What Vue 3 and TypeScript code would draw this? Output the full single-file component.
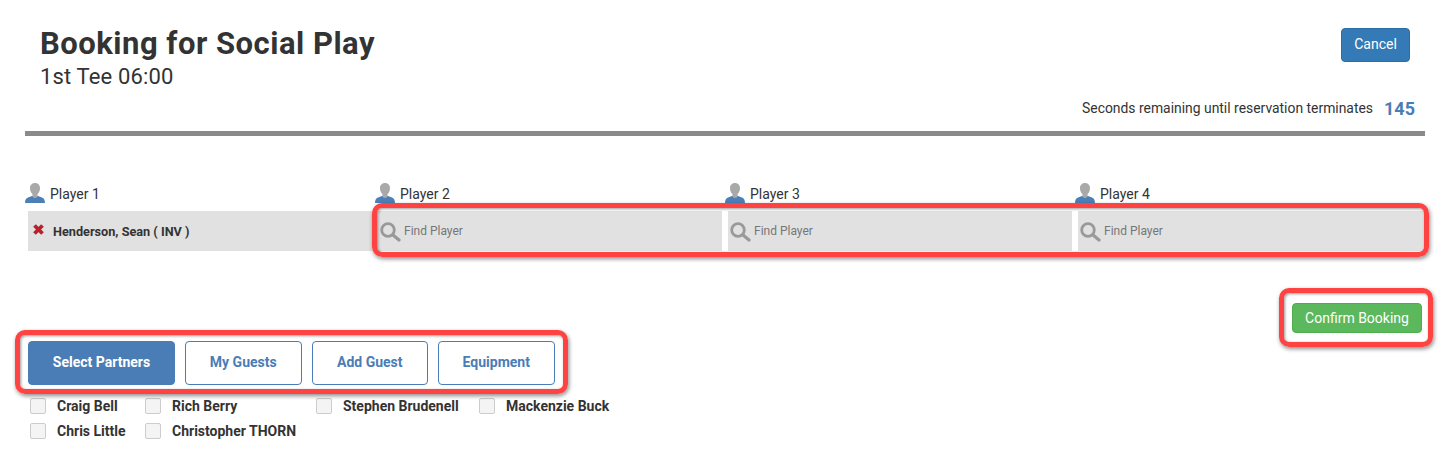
<template>
  <div class="page">
    <header class="head">
      <div class="titles">
        <h1>Booking for Social Play</h1>
        <div class="sub">1st Tee 06:00</div>
      </div>
      <button class="cancel">Cancel</button>
    </header>
    <div class="timer">
      <span>Seconds remaining until reservation terminates</span>
      <strong>145</strong>
    </div>
    <div class="rule"></div>

    <div class="players">
      <div v-for="(p, i) in players" :key="p" class="player">
        <div class="plabel">
          <svg class="person" width="20" height="20" viewBox="0 0 20 20">
            <path d="M0 20c.2-3.200 1-4.900 3-5.500l4-1.500h6l4 1.500c2 .6 2.800 2.300 3 5.500z" fill="#4a7fb8" />
            <path d="M10 0c3 0 5 2.200 5 5.200 0 2.600-1 4.500-2.400 5.700v1.900c0 1.400-1.200 2.200-2.600 2.200s-2.600-.8-2.600-2.200v-1.900C6 9.700 5 7.800 5 5.200 5 2.200 7 0 10 0z" fill="#a9a9a9" />
          </svg>
          <span>{{ p }}</span>
        </div>
        <div v-if="i === 0" class="cell first">
          <svg class="remove" width="13" height="13" viewBox="0 0 13 13">
            <path d="M2.500 2.500l8 8M10.500 2.500l-8 8" stroke="#b8202c" stroke-width="3.800" />
          </svg>
          <b>Henderson, Sean ( INV )</b>
        </div>
        <div v-else class="cell">
          <svg class="search" width="22" height="22" viewBox="0 0 22 22" fill="none" stroke="#999" stroke-linecap="round">
            <circle cx="8" cy="10" r="6.300" stroke-width="2.800" />
            <path d="M13 15l6 5" stroke-width="3.200" />
          </svg>
          <span>Find Player</span>
        </div>
      </div>
      <div class="mark mark-find"></div>
    </div>

    <div class="confirm-row">
      <button class="confirm">Confirm Booking</button>
      <div class="mark mark-confirm"></div>
    </div>

    <div class="tabs">
      <button v-for="(t, i) in tabs" :key="t" class="tab" :class="{ active: i === 0 }">{{ t }}</button>
      <div class="mark mark-tabs"></div>
    </div>

    <div class="partners">
      <label v-for="n in partners" :key="n" class="partner">
        <i class="box"></i>
        <span>{{ n }}</span>
      </label>
    </div>
  </div>
</template>

<script setup lang="ts">
const players = ['Player 1', 'Player 2', 'Player 3', 'Player 4']
const tabs = ['Select Partners', 'My Guests', 'Add Guest', 'Equipment']
const partners = [
  'Craig Bell',
  'Rich Berry',
  'Stephen Brudenell',
  'Mackenzie Buck',
  'Chris Little',
  'Christopher THORN'
]
</script>

<style>
html,
body {
  margin: 0;
  background: #fff;
}
</style>

<style scoped>
* {
  box-sizing: border-box;
}

.page {
  width: 1453px;
  height: 450px;
  overflow: hidden;
  padding: 0 28px 0 25px;
  font-family: Roboto, Arial, sans-serif;
  color: #333;
}

.head {
  display: flex;
  justify-content: space-between;
  align-items: flex-start;
  padding: 26px 15px 0;
  height: 94px;
}

h1 {
  margin: 0;
  font-size: 31px;
  line-height: 36px;
  font-weight: 700;
  letter-spacing: 0.5px;
}

.sub {
  font-size: 22px;
  line-height: 30px;
  letter-spacing: 0.15px;
}

.cancel {
  width: 69px;
  height: 34px;
  margin: 2px 0 0;
  padding: 0 0 2px;
  background: #337ab7;
  border: 1px solid #2e6da4;
  border-radius: 4px;
  color: #fff;
  font: 14px Roboto, Arial, sans-serif;
}

.timer {
  display: flex;
  justify-content: flex-end;
  align-items: center;
  gap: 11px;
  height: 28px;
  padding-right: 10px;
  font-size: 13.9px;
}

.timer strong {
  color: #4a7db5;
  font-size: 18px;
}

.rule {
  height: 5px;
  margin-top: 9px;
  background: #8a8a8a;
}

.players {
  position: relative;
  display: grid;
  grid-template-columns: repeat(4, 350px);
  margin-top: 45px;
}

.plabel {
  display: flex;
  align-items: center;
  gap: 5px;
  height: 30px;
  padding-bottom: 4px;
  font-size: 14px;
}

.person {
  margin-top: -3px;
}

.cell {
  display: flex;
  align-items: center;
  height: 40px;
  margin: 0 3px;
  padding-left: 2px;
  background: #e1e1e1;
  font-size: 12px;
  color: #777;
}

.player:nth-child(2) .cell {
  margin-left: 0;
  padding-left: 5px;
}

.player:nth-child(4) .cell {
  margin-right: 0;
}

.cell.first {
  padding-left: 4px;
  font-size: 12.7px;
  color: #333;
}

.remove {
  margin: 0 8px 4px 0;
}

.search {
  margin-right: 2px;
}

.confirm-row {
  position: relative;
  display: flex;
  justify-content: flex-end;
  padding: 52px 3px 0 0;
}

.confirm {
  width: 130px;
  height: 30px;
  padding: 0;
  background: #5cb85c;
  border: 1px solid #4cae4c;
  border-radius: 4px;
  color: #fff;
  font: 14px Roboto, Arial, sans-serif;
}

.tabs {
  position: relative;
  display: flex;
  gap: 10px;
  margin: 8px 0 0 3px;
}

.tab {
  width: 116.500px;
  height: 44px;
  padding: 0 0 2px;
  background: #fff;
  border: 1px solid #4a7db5;
  border-radius: 4px;
  color: #4a7db5;
  font: 700 14px Roboto, Arial, sans-serif;
}

.tab.active {
  width: 147px;
  background: #4a7db5;
  color: #fff;
}

.partners {
  display: grid;
  grid-template-columns: 115px 171px 163px auto;
  justify-content: start;
  row-gap: 5px;
  margin: 11px 0 0 5px;
}

.partner {
  display: flex;
  align-items: center;
  height: 20px;
  font-size: 14px;
  font-weight: 700;
}

.box {
  width: 16px;
  height: 16px;
  margin-right: 11px;
  background: #f4f4f4;
  border: 1px solid #ccc;
  border-radius: 2px;
}

.mark {
  position: absolute;
  border: 5px solid #ff4242;
  border-radius: 10px;
  box-shadow: 1px 2px 4px rgba(0, 0, 0, 0.45), inset 1px 1px 3px rgba(0, 0, 0, 0.4);
  pointer-events: none;
}

.mark-find {
  left: 347px;
  top: 22px;
  width: 1057px;
  height: 54px;
}

.mark-confirm {
  right: -8px;
  top: 37px;
  width: 154px;
  height: 59px;
}

.mark-tabs {
  left: -13px;
  top: -11px;
  width: 553px;
  height: 64px;
}
</style>
